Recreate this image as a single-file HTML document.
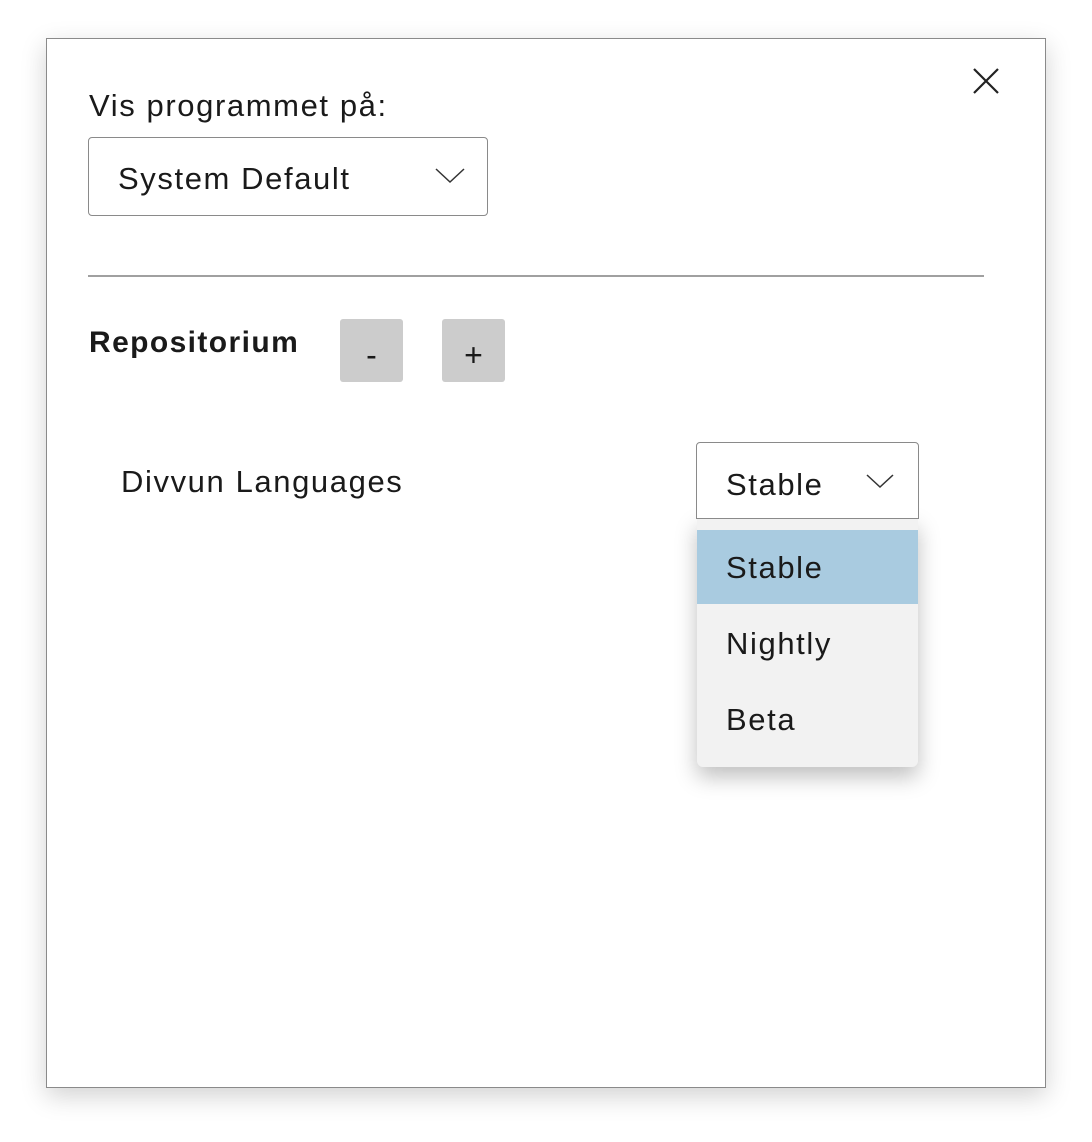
<!DOCTYPE html>
<html><head><style>
body{margin:0;width:1092px;height:1142px;background:#fff;font-family:"Liberation Sans",sans-serif;position:relative;overflow:hidden;color:#1a1a1a}
.win{position:absolute;left:46px;top:38px;width:998px;height:1048px;border:1px solid #8a8a8a;background:#fff;box-shadow:0 8px 24px rgba(0,0,0,.18)}
.a{position:absolute;white-space:nowrap}
.t{font-size:31px;letter-spacing:1.6px}
.box{position:absolute;border:1px solid #8a8a8a;border-radius:4px;background:#fff;box-sizing:border-box}
.btn{position:absolute;width:63px;height:63px;background:#cccccc;border-radius:3px;font-size:32px;text-align:center;line-height:72px}
</style></head><body>
<div class="win"></div>
<svg class="a" style="left:972px;top:67px" width="28" height="28"><path d="M2 2L26 26M26 2L2 26" stroke="#222" stroke-width="2.2"/></svg>
<div class="a t" style="left:89px;top:88px">Vis programmet på:</div>
<div class="box" style="left:88px;top:137px;width:400px;height:79px"></div>
<div class="a t" style="left:118px;top:161px">System Default</div>
<svg class="a" style="left:435px;top:168px" width="30" height="16"><path d="M1 1L15 14L29 1" stroke="#333" stroke-width="1.5" fill="none"/></svg>
<div class="a" style="left:88px;top:275px;width:896px;height:2px;background:#a0a0a0"></div>
<div class="a" style="left:89px;top:326px;font-size:30px;font-weight:bold;letter-spacing:1.4px">Repositorium</div>
<div class="btn" style="left:340px;top:319px">-</div>
<div class="btn" style="left:442px;top:319px">+</div>
<div class="a t" style="left:121px;top:464px">Divvun Languages</div>
<div class="a" style="left:697px;top:518px;width:221px;height:249px;background:#f2f2f2;border-radius:0 0 6px 6px;box-shadow:0 10px 22px rgba(0,0,0,.25)"></div>
<div class="a" style="left:697px;top:530px;width:221px;height:74px;background:#a9cbe0"></div>
<div class="box" style="left:696px;top:442px;width:223px;height:77px;border-radius:4px 4px 0 0"></div>
<div class="a t" style="left:726px;top:467px">Stable</div>
<svg class="a" style="left:866px;top:474px" width="28" height="15"><path d="M1 1L14 13L27 1" stroke="#333" stroke-width="1.5" fill="none"/></svg>
<div class="a t" style="left:726px;top:550px">Stable</div>
<div class="a t" style="left:726px;top:626px">Nightly</div>
<div class="a t" style="left:726px;top:702px">Beta</div>
</body></html>
